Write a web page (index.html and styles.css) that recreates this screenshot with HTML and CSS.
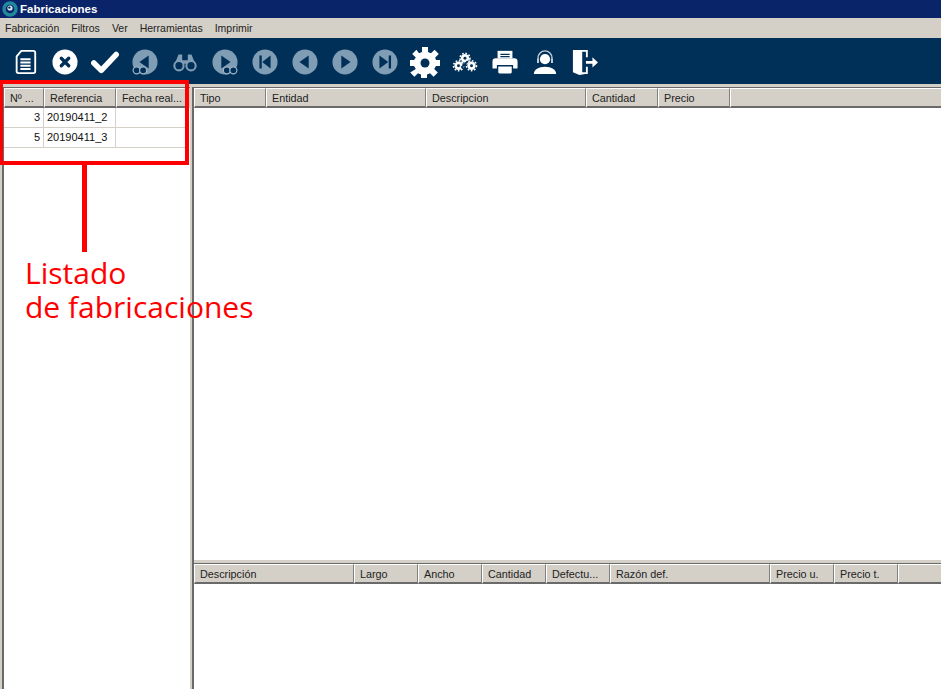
FILE: index.html
```html
<!DOCTYPE html>
<html lang="es">
<head>
    <meta charset="UTF-8">
    <meta name="viewport" content="width=device-width, initial-scale=1.0">
    <title>Fabricaciones</title>
    <link rel="stylesheet" href="styles.css">
</head>
<body>
    <div class="app">
        <div class="title-bar">
            <svg class="app-icon" viewBox="0 0 16 16">
                <circle cx="8" cy="8" r="6" fill="none" stroke="#1f8a9c" stroke-width="3.4"/>
                <circle cx="8" cy="7" r="2.6" fill="#d8e8f0"/>
                <circle cx="7.4" cy="6.6" r="1.2" fill="#12305c"/>
            </svg>
            <span>Fabricaciones</span>
        </div>

        <div class="menu-bar">
            <span>Fabricación</span>
            <span>Filtros</span>
            <span>Ver</span>
            <span>Herramientas</span>
            <span>Imprimir</span>
        </div>

        <div class="toolbar">
            <!-- nuevo -->
            <svg class="tool" viewBox="0 0 28 28">
                <path d="M10 2h13a2 2 0 0 1 2 2v20a2 2 0 0 1-2 2H7a2 2 0 0 1-2-2V8z" fill="#002f57" stroke="#fff" stroke-width="2"/>
                <path d="M9 10h11v2H9zM9 13.500h11v2H9zM9 17h11v2H9zM9 20.500h11v2H9z" fill="#fff"/>
            </svg>
            <!-- cancelar -->
            <svg class="tool" viewBox="0 0 28 28">
                <circle cx="14" cy="14" r="13.500" fill="#fff"/>
                <path d="M10 10l8 8M18 10l-8 8" stroke="#002f57" stroke-width="3.600" stroke-linecap="round"/>
            </svg>
            <!-- aceptar -->
            <svg class="tool wide" viewBox="0 0 32 28">
                <path d="M4 15l8 8L28 6" fill="none" stroke="#fff" stroke-width="6" stroke-linecap="round" stroke-linejoin="round"/>
            </svg>
            <!-- buscar anterior -->
            <svg class="tool" viewBox="0 0 28 28">
                <circle cx="14" cy="14" r="13.500" fill="#7f9db4"/>
                <path d="M8 14l10-7v14z" fill="#002f57"/>
                <circle cx="5" cy="23" r="3.800" fill="#002f57" stroke="#9fb6c8" stroke-width="1.300"/>
                <circle cx="12" cy="23" r="3.800" fill="#002f57" stroke="#9fb6c8" stroke-width="1.300"/>
            </svg>
            <!-- buscar -->
            <svg class="tool" viewBox="0 0 28 28">
                <path d="M7 6h4v6h6V6h4l4 10H3z" fill="#7f9db4"/>
                <circle cx="7.500" cy="18" r="5" fill="#002f57" stroke="#7f9db4" stroke-width="2.200"/>
                <circle cx="20.500" cy="18" r="5" fill="#002f57" stroke="#7f9db4" stroke-width="2.200"/>
            </svg>
            <!-- buscar siguiente -->
            <svg class="tool" viewBox="0 0 28 28">
                <circle cx="14" cy="14" r="13.500" fill="#7f9db4"/>
                <path d="M20 14L10 7v14z" fill="#002f57"/>
                <circle cx="16" cy="23" r="3.800" fill="#002f57" stroke="#9fb6c8" stroke-width="1.300"/>
                <circle cx="23" cy="23" r="3.800" fill="#002f57" stroke="#9fb6c8" stroke-width="1.300"/>
            </svg>
            <!-- primero -->
            <svg class="tool" viewBox="0 0 28 28">
                <circle cx="14" cy="14" r="13.500" fill="#7f9db4"/>
                <path d="M8 7h2.500v14H8zM11 14l9-7v14z" fill="#002f57"/>
            </svg>
            <!-- anterior -->
            <svg class="tool" viewBox="0 0 28 28">
                <circle cx="14" cy="14" r="13.500" fill="#7f9db4"/>
                <path d="M8 14l10-7v14z" fill="#002f57"/>
            </svg>
            <!-- siguiente -->
            <svg class="tool" viewBox="0 0 28 28">
                <circle cx="14" cy="14" r="13.500" fill="#7f9db4"/>
                <path d="M20 14L10 7v14z" fill="#002f57"/>
            </svg>
            <!-- ultimo -->
            <svg class="tool" viewBox="0 0 28 28">
                <circle cx="14" cy="14" r="13.500" fill="#7f9db4"/>
                <path d="M17.500 14L8 7v14zM18 7h2.500v14H18z" fill="#002f57"/>
            </svg>
            <!-- configuracion -->
            <svg class="tool big" viewBox="0 0 32 32">
                <path d="M13 1h6v5l3 1.300 3.600-3.600 4.200 4.200-3.600 3.600L27 14h4v6h-4l-1.800 3 3.600 3.600-4.200 4.200-3.600-3.600-3 1.300v4h-6v-4l-3-1.300-3.600 3.600-4.200-4.200L6.800 23 5 20H1v-6h4l1.800-2.500-3.600-3.600 4.200-4.200L10 7.300l3-1.300z" fill="#fff"/>
                <circle cx="16" cy="17" r="4.500" fill="#002f57"/>
            </svg>
            <!-- procesos -->
            <svg class="tool" viewBox="0 0 28 28">
                <g fill="#fff">
                    <circle cx="14" cy="10" r="4.500"/>
                    <circle cx="7" cy="18" r="4.500"/>
                    <circle cx="21" cy="18" r="4.500"/>
                </g>
                <g fill="none" stroke="#fff" stroke-width="1.600" stroke-dasharray="1.800 1.800">
                    <circle cx="14" cy="10" r="5.400"/>
                    <circle cx="7" cy="18" r="5.400"/>
                    <circle cx="21" cy="18" r="5.400"/>
                </g>
                <g fill="#002f57">
                    <circle cx="14" cy="10" r="1.600"/>
                    <circle cx="7" cy="18" r="1.600"/>
                    <circle cx="21" cy="18" r="1.600"/>
                </g>
                <path d="M10 20l7-7" stroke="#002f57" stroke-width="2"/>
            </svg>
            <!-- imprimir -->
            <svg class="tool" viewBox="0 0 28 28">
                <path d="M6 2h16v8H6z" fill="#fff"/>
                <path d="M9 5h10v1.500H9zM9 7.500h10V9H9z" fill="#002f57"/>
                <path d="M4 10h20a3.500 3.500 0 0 1 3.500 3.500V21H.5v-7.500A3.500 3.500 0 0 1 4 10z" fill="#fff"/>
                <path d="M6 18h16v7a2 2 0 0 1-2 2H8a2 2 0 0 1-2-2z" fill="#fff" stroke="#002f57" stroke-width="1.500"/>
            </svg>
            <!-- soporte -->
            <svg class="tool" viewBox="0 0 28 28">
                <circle cx="14" cy="11" r="5.500" fill="#fff"/>
                <path d="M6.500 15V9.500a7.500 7.500 0 0 1 15 0V15" fill="none" stroke="#c3cfd9" stroke-width="1.500"/>
                <path d="M5.500 10.500h2v4.500h-2zM20.500 10.500h2v4.500h-2z" fill="#c3cfd9"/>
                <path d="M2 27c0-5 5-8 12-8s12 3 12 8z" fill="#fff"/>
            </svg>
            <!-- salir -->
            <svg class="tool" viewBox="0 0 28 28">
                <path d="M1 1h16v8h-2V3h-4v22h4v-6h2v8l-3-.1L8 28 1 25z" fill="#fff"/>
                <path d="M15 13h7V9l6 5.500-6 5.500v-4h-7z" fill="#fff"/>
            </svg>
        </div>

        <div class="workspace">
            <div class="left-pane">
                <div class="grid-header">
                    <div class="col w-num">Nº ...</div>
                    <div class="col w-ref">Referencia</div>
                    <div class="col w-date">Fecha real...</div>
                </div>
                <div class="row">
                    <div class="cell w-num num">3</div>
                    <div class="cell w-ref">20190411_2</div>
                    <div class="cell w-date"></div>
                </div>
                <div class="row">
                    <div class="cell w-num num">5</div>
                    <div class="cell w-ref">20190411_3</div>
                    <div class="cell w-date"></div>
                </div>
            </div>

            <div class="right-pane">
                <div class="grid top-grid">
                    <div class="grid-header">
                        <div class="col c72">Tipo</div>
                        <div class="col c160">Entidad</div>
                        <div class="col c160">Descripcion</div>
                        <div class="col c72">Cantidad</div>
                        <div class="col c72">Precio</div>
                        <div class="col fill"></div>
                    </div>
                </div>
                <div class="grid bottom-grid">
                    <div class="grid-header">
                        <div class="col c160">Descripción</div>
                        <div class="col c64">Largo</div>
                        <div class="col c64">Ancho</div>
                        <div class="col c64">Cantidad</div>
                        <div class="col c64">Defectu...</div>
                        <div class="col c160">Razón def.</div>
                        <div class="col c64">Precio u.</div>
                        <div class="col c64">Precio t.</div>
                        <div class="col fill"></div>
                    </div>
                </div>
            </div>
        </div>

        <!-- anotacion sobre la captura -->
        <div class="note-box"></div>
        <div class="note-line"></div>
        <div class="note-text">Listado<br>de fabricaciones</div>
    </div>
</body>
</html>
```

FILE: styles.css
```css
* {
    margin: 0;
    padding: 0;
    box-sizing: border-box;
}

html, body {
    height: 100%;
    overflow: hidden;
}

body {
    background-color: white;
    font-family: "Liberation Sans", Arial, sans-serif;
    font-size: 10.8px;
    color: #222;
}

.app {
    position: relative;
    display: flex;
    flex-direction: column;
    height: 689px;
}

.title-bar {
    display: flex;
    align-items: center;
    gap: 2px;
    height: 18px;
    padding-left: 2px;
    background-color: #0a246a;
    color: white;
    font-size: 11.5px;
    font-weight: bold;
}

.app-icon {
    width: 16px;
    height: 16px;
}

.menu-bar {
    display: flex;
    gap: 12px;
    height: 20px;
    padding: 0 5px;
    align-items: center;
    background-color: #d4d0c8;
    font-size: 10.5px;
}

.toolbar {
    display: flex;
    align-items: center;
    height: 46px;
    padding: 1px 0 0 5px;
    background-color: #002f57;
}

.tool {
    width: 26px;
    height: 26px;
    margin: 0 7px;
    flex: none;
}

.tool.wide {
    width: 30px;
    margin: 0 5px;
}

.tool.big {
    width: 32px;
    height: 32px;
    margin: 0 4px;
}

.workspace {
    flex: 1;
    display: flex;
    min-height: 0;
    background-color: #d4d0c8;
    padding-top: 3px;
}

.left-pane {
    width: 188px;
    margin-left: 2px;
    background-color: white;
    border-left: 2px solid #6a6a6a;
    border-top: 1px solid #6a6a6a;
}

.right-pane {
    flex: 1;
    display: flex;
    flex-direction: column;
    min-width: 0;
    margin-left: 2px;
    border-left: 2px solid #6a6a6a;
}

.grid {
    background-color: white;
    border-top: 1px solid #6a6a6a;
}

.top-grid {
    height: 473px;
}

.bottom-grid {
    flex: 1;
    margin-top: 3px;
}

.grid-header {
    display: flex;
    height: 20px;
    background-color: #d4d0c8;
}

.col {
    flex: none;
    height: 20px;
    padding-left: 5px;
    line-height: 18px;
    overflow: hidden;
    white-space: nowrap;
    border-top: 1px solid white;
    border-left: 1px solid white;
    border-right: 1px solid #808080;
    border-bottom: 2px solid #6a6a6a;
}

.col.fill {
    flex: 1;
    border-right: none;
}

.c72 { width: 72px; }
.c160 { width: 160px; }
.c64 { width: 64px; }

.w-num { width: 40px; }
.w-ref { width: 72px; }
.w-date { width: 70px; }

.row {
    display: flex;
    height: 20px;
}

.cell {
    flex: none;
    height: 20px;
    padding: 0 3px;
    line-height: 19px;
    font-size: 11px;
    border-right: 1px solid #d4d0c8;
    border-bottom: 1px solid #d4d0c8;
    color: #111;
}

.cell.num {
    text-align: right;
}

.note-box {
    position: absolute;
    left: -1px;
    top: 80px;
    width: 190px;
    height: 85px;
    border: 4px solid #ff0000;
}

.note-line {
    position: absolute;
    left: 82px;
    top: 165px;
    width: 5px;
    height: 87px;
    background-color: #ff0000;
}

.note-text {
    position: absolute;
    left: 25px;
    top: 256px;
    font-family: "Open Sans", "Noto Sans", sans-serif;
    font-size: 30px;
    font-weight: 500;
    line-height: 34px;
    color: #ff0000;
    white-space: nowrap;
}
```
